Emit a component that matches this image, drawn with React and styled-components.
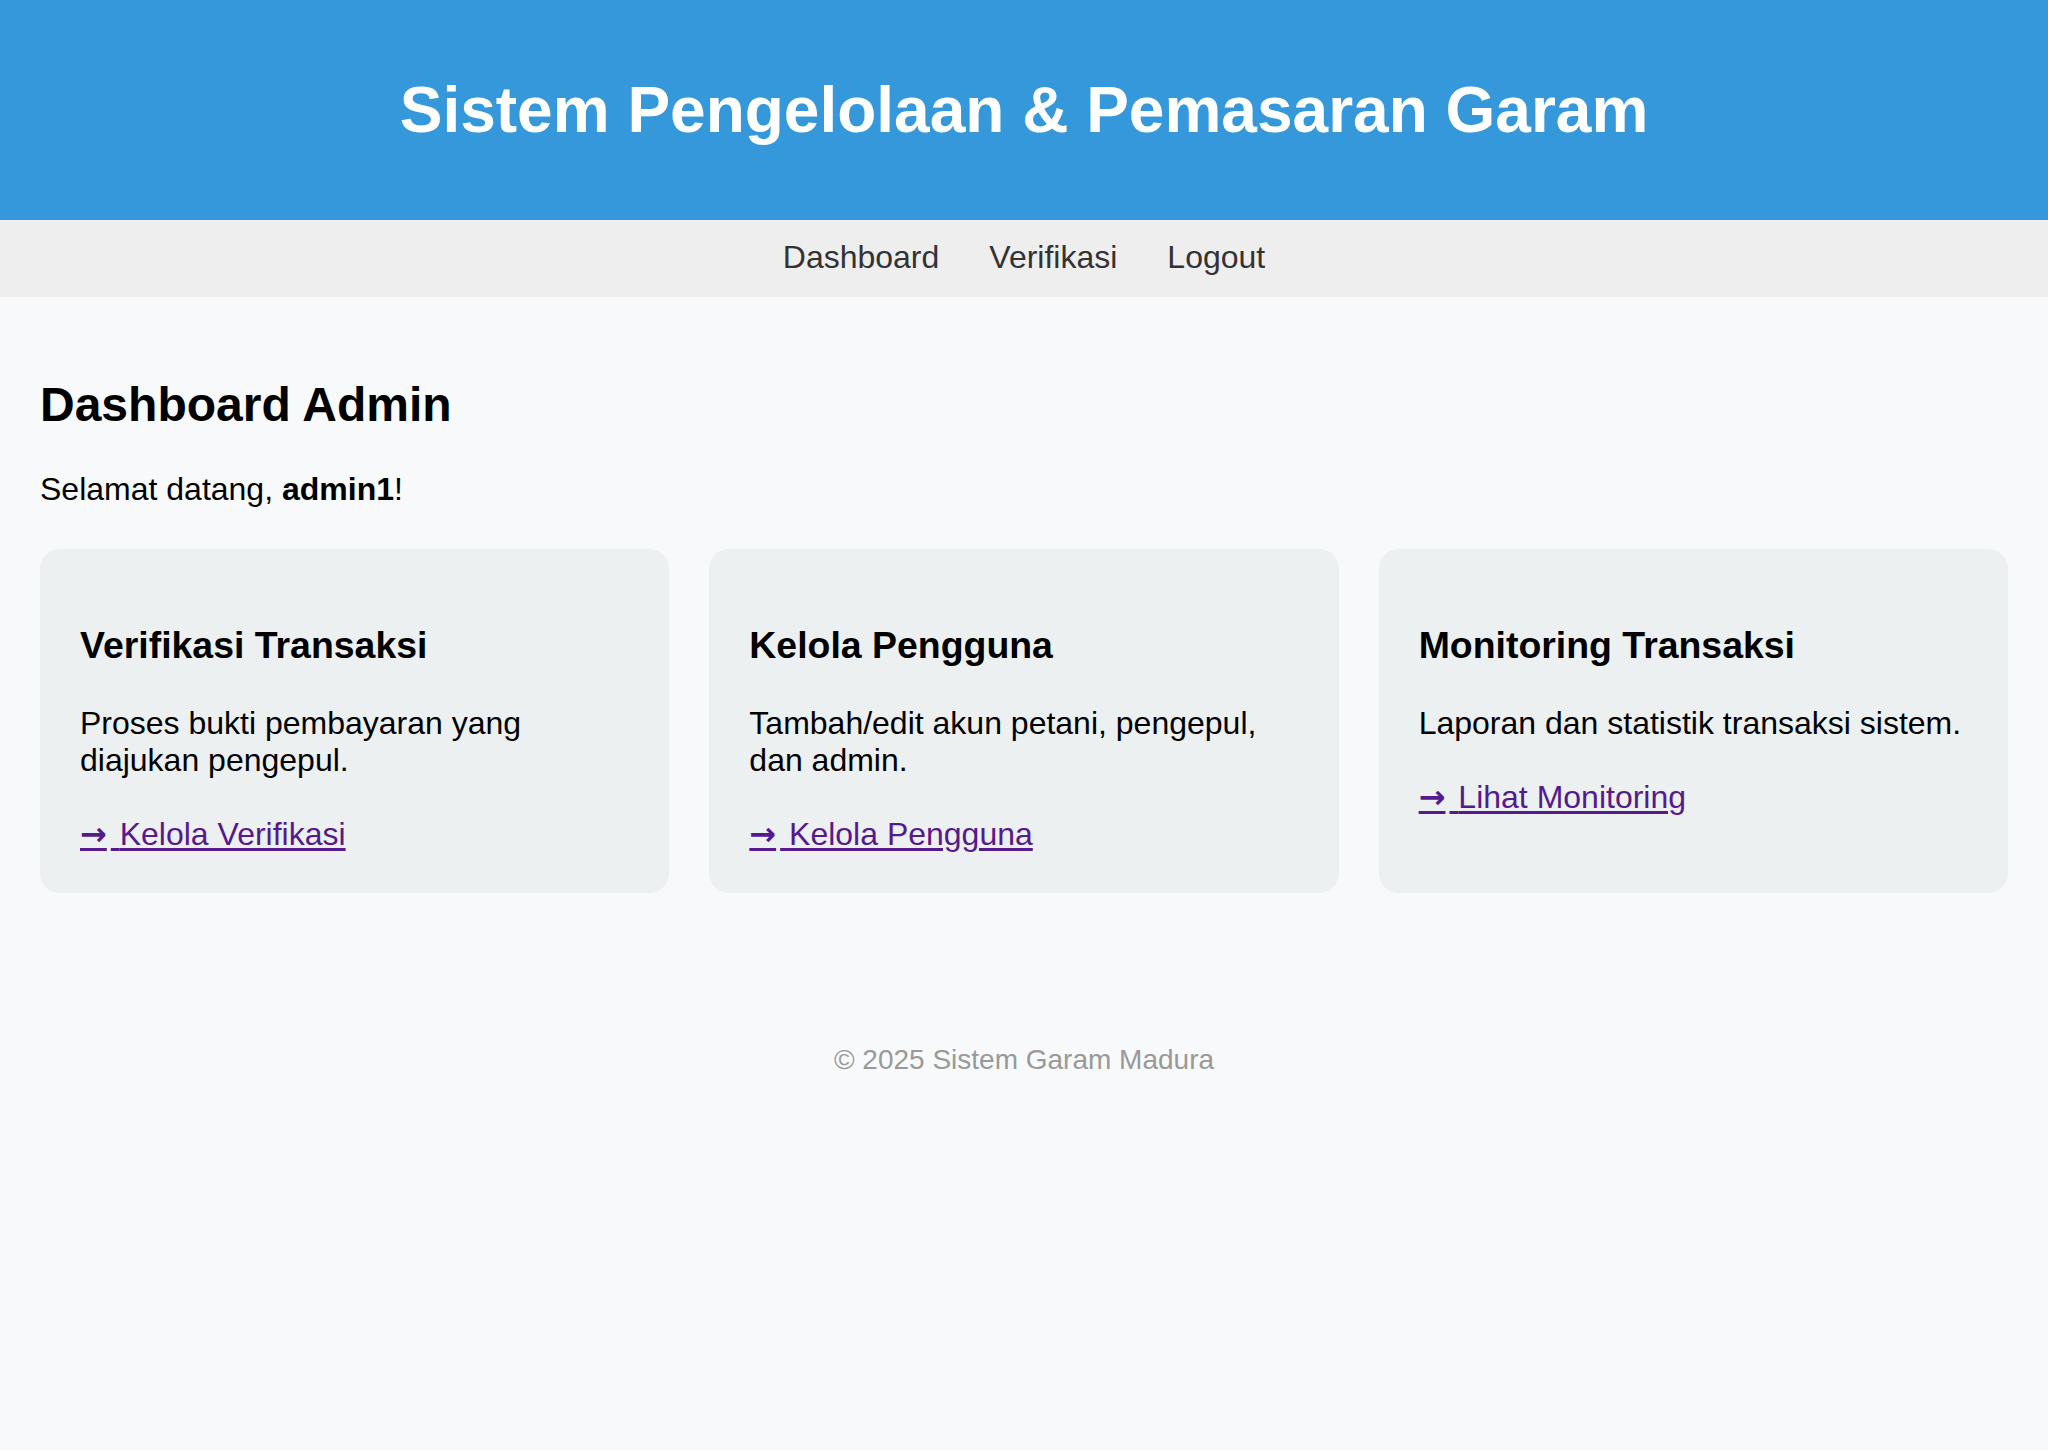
import React from 'react';
import styled, { createGlobalStyle } from 'styled-components';

const GlobalStyle = createGlobalStyle`
  html, body {
    margin: 0;
    padding: 0;
    background: #f8f9fa;
    font-family: "Liberation Sans", Arial, sans-serif;
    font-size: 32px;
    color: #000;
  }
`;

const Header = styled.header`
  background: #3498db;
  color: #fff;
  text-align: center;
  padding: 30px 0;
`;

const Title = styled.h1`
  margin: 42.88px 0;
  font-size: 64px;
  font-weight: bold;
  line-height: normal;
`;

const Nav = styled.nav`
  display: flex;
  justify-content: center;
  gap: 50px;
  background: #eee;
  padding: 19px 0 21px;
`;

const NavLink = styled.a`
  color: #333;
  text-decoration: none;
  font-size: 32px;
  line-height: normal;
`;

const Main = styled.main`
  padding: 40px 40px 40px;
`;

const Heading = styled.h2`
  font-size: 48px;
  margin: 39.84px 0;
  line-height: normal;
`;

const Welcome = styled.p`
  margin: 0;
`;

const CardGrid = styled.div`
  display: grid;
  grid-template-columns: repeat(3, 1fr);
  gap: 40px;
  margin-top: 41px;
`;

const Card = styled.div`
  background: #ecf0f1;
  border-radius: 20px;
  padding: 40px 40px 40px;
`;

const CardTitle = styled.h3`
  font-size: 37.44px;
  margin: 35px 0 38px;
  line-height: normal;
`;

const CardText = styled.p`
  margin: 0 0 36px;
  line-height: normal;
`;

const CardLink = styled.a`
  display: inline-block;
  color: #551a8b;
  text-decoration: underline;
  text-underline-offset: 3px;
  line-height: normal;
`;

const Arrow = styled.span`
  font-family: "DejaVu Sans", sans-serif;
  font-weight: bold;
  font-size: 32px;
  margin-right: 4px;
`;

const Footer = styled.footer`
  text-align: center;
  color: #999;
  font-size: 28px;
  padding: 0 0 40px;
  margin-top: 111px;
`;

const cards = [
  {
    title: 'Verifikasi Transaksi',
    text: 'Proses bukti pembayaran yang diajukan pengepul.',
    link: 'Kelola Verifikasi',
  },
  {
    title: 'Kelola Pengguna',
    text: 'Tambah/edit akun petani, pengepul, dan admin.',
    link: 'Kelola Pengguna',
  },
  {
    title: 'Monitoring Transaksi',
    text: 'Laporan dan statistik transaksi sistem.',
    link: 'Lihat Monitoring',
  },
];

export default function App() {
  return (
    <>
      <GlobalStyle />
      <Header>
        <Title>Sistem Pengelolaan &amp; Pemasaran Garam</Title>
      </Header>
      <Nav>
        <NavLink href="#">Dashboard</NavLink>
        <NavLink href="#">Verifikasi</NavLink>
        <NavLink href="#">Logout</NavLink>
      </Nav>
      <Main>
        <Heading>Dashboard Admin</Heading>
        <Welcome>
          Selamat datang, <strong>admin1</strong>!
        </Welcome>
        <CardGrid>
          {cards.map((c) => (
            <Card key={c.title}>
              <CardTitle>{c.title}</CardTitle>
              <CardText>{c.text}</CardText>
              <CardLink href="#">
                <Arrow>→</Arrow> {c.link}
              </CardLink>
            </Card>
          ))}
        </CardGrid>
      </Main>
      <Footer>© 2025 Sistem Garam Madura</Footer>
    </>
  );
}
